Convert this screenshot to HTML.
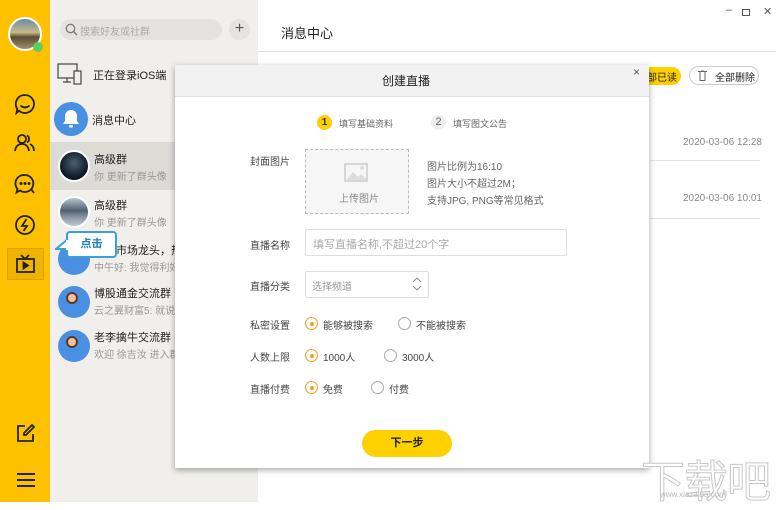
<!DOCTYPE html>
<html><head><meta charset="utf-8"><style>
*{margin:0;padding:0;box-sizing:border-box}
body{width:776px;height:502px;overflow:hidden;position:relative;background:#fff;font-family:"Liberation Sans","Noto Sans CJK SC",sans-serif;font-size:11px;color:#333}
.a{position:absolute}
.side{left:0;top:0;width:50px;height:502px;background:#fdc100}
.list{left:50px;top:0;width:208px;height:502px;background:#f0efeb}
.t{position:absolute;white-space:nowrap}
.av{position:absolute;width:32px;height:32px;border-radius:50%}
.lbl{position:absolute;left:250px;font-size:10px;color:#444}
.radio{position:absolute;width:13px;height:13px;border-radius:50%;border:1px solid #aaa;background:#fff}
.radio.on{border-color:#f0a020}
.radio.on:after{content:"";position:absolute;left:3.5px;top:3.5px;width:4px;height:4px;border-radius:50%;background:#f0a020}
.rt{position:absolute;font-size:10px;color:#444}
</style></head><body>
<div class="a side"></div>
<div class="a list"></div>
<div class="av" style="left:8px;top:17px;width:34px;height:34px;background:linear-gradient(#6a8aa8 0%,#c9b98a 45%,#5a4a30 60%,#a09070 100%);border:2px solid #fff"></div>
<div class="a" style="left:33px;top:42px;width:10px;height:10px;border-radius:50%;background:#5bd060"></div>
<svg class="a" style="left:14px;top:93px" width="22" height="22" viewBox="0 0 22 22" fill="none" stroke="#222" stroke-width="1.8"><path d="M11 2a9 9 0 1 1-6 15.7L2.5 20l.8-4A9 9 0 0 1 11 2z"/><path d="M6.5 12.5q4.5 4 9 0"/></svg>
<svg class="a" style="left:14px;top:133px" width="22" height="20" viewBox="0 0 22 20" fill="none" stroke="#222" stroke-width="1.8"><circle cx="8" cy="6" r="4"/><path d="M1 18q1-7 7-7t7 7"/><path d="M13 2.5a4 4 0 0 1 0 7M16 11q4 2 4 7"/></svg>
<svg class="a" style="left:14px;top:173px" width="22" height="22" viewBox="0 0 22 22" fill="none" stroke="#222" stroke-width="1.8"><path d="M11 2a8.5 8.5 0 1 1-5 15.5L2.5 19.5l1-3.5A8.5 8.5 0 0 1 11 2z"/><circle cx="7" cy="10.5" r=".6" fill="#222"/><circle cx="11" cy="10.5" r=".6" fill="#222"/><circle cx="15" cy="10.5" r=".6" fill="#222"/><path d="M17 16l3 4"/></svg>
<svg class="a" style="left:14px;top:214px" width="22" height="22" viewBox="0 0 22 22" fill="none" stroke="#222" stroke-width="1.8"><circle cx="11" cy="11" r="9"/><path d="M12.5 5L8 12h5l-3.5 5"/></svg>
<div class="a" style="left:7px;top:248px;width:37px;height:32px;background:#f0b400;border:1px solid #d9a200"></div>
<svg class="a" style="left:15px;top:253px" width="21" height="21" viewBox="0 0 21 21" fill="none" stroke="#222" stroke-width="1.8"><path d="M6 2l4 4 4-4"/><rect x="2" y="6" width="17" height="13"/><path d="M8.5 9.5v6l4.5-3z" fill="#222"/></svg>
<svg class="a" style="left:16px;top:423px" width="20" height="20" viewBox="0 0 20 20" fill="none" stroke="#222" stroke-width="1.8"><path d="M9 3H2v15h15v-7"/><path d="M16 2l2 2-8 8H8v-2z"/></svg>
<svg class="a" style="left:16px;top:472px" width="20" height="16" viewBox="0 0 20 16" stroke="#222" stroke-width="2"><path d="M1 2h18M1 8h18M1 14h18"/></svg>
<div class="a" style="left:60px;top:19px;width:162px;height:21px;border-radius:11px;background:#e4e3df"></div>
<svg class="a" style="left:65px;top:23px" width="13" height="13" viewBox="0 0 13 13" fill="none" stroke="#777" stroke-width="1.3"><circle cx="5.5" cy="5.5" r="4.2"/><path d="M8.5 8.5l3.5 3.5"/></svg>
<div class="t" style="left:80px;top:23px;font-size:10px;color:#aaa">搜索好友或社群</div>
<div class="a" style="left:229px;top:19px;width:21px;height:21px;border-radius:50%;background:#e4e3df;text-align:center;line-height:20px;font-size:16px;color:#555">+</div>
<svg class="a" style="left:57px;top:62px" width="26" height="24" viewBox="0 0 26 24" fill="none" stroke="#444" stroke-width="1.2"><rect x="1" y="2" width="19" height="14"/><path d="M6 20h8M10 16v4"/><rect x="17" y="9" width="7" height="13" fill="#f0efeb"/></svg>
<div class="t" style="left:93px;top:67px;font-size:11px;color:#222">正在登录iOS端</div>
<div class="av" style="left:54px;top:102px;width:34px;height:34px;background:#4a90e2"></div>
<svg class="a" style="left:62px;top:109px" width="18" height="20" viewBox="0 0 18 20" fill="#fff"><path d="M9 1a6 6 0 0 1 6 6v5l2 3H1l2-3V7a6 6 0 0 1 6-6z"/><rect x="7" y="16" width="4" height="2.5" rx="1"/></svg>
<div class="t" style="left:92px;top:112px;font-size:11px;color:#222">消息中心</div>
<div class="a" style="left:50px;top:142px;width:208px;height:48px;background:#dcdbd6"></div>
<div class="av" style="left:58px;top:150px;background:radial-gradient(circle at 50% 40%,#4a6070,#0a1520 70%);border:2px solid #fff"></div>
<div class="t" style="left:94px;top:151px;font-size:11px;color:#222">高级群</div>
<div class="t" style="left:94px;top:168px;font-size:10px;color:#999">你 更新了群头像</div>
<div class="av" style="left:58px;top:196px;background:linear-gradient(#b8c4d0 0%,#506070 45%,#8a9aa8 70%,#c0c8d0 100%);border:2px solid #fff"></div>
<div class="t" style="left:94px;top:197px;font-size:11px;color:#222">高级群</div>
<div class="t" style="left:94px;top:214px;font-size:10px;color:#999">你 更新了群头像</div>
<div class="av" style="left:58px;top:243px;background:#4a90e2"></div>
<div class="t" style="left:116px;top:242px;font-size:11px;color:#222">市场龙头，热</div>
<div class="t" style="left:94px;top:259px;font-size:10px;color:#999">中午好: 我觉得利好</div>
<div class="av" style="left:58px;top:286px;background:#4a90e2"></div>
<div class="a" style="left:66px;top:292px;width:12px;height:12px;border-radius:50%;background:#f2c09a;border:2px solid #5a3a2a"></div>
<div class="t" style="left:94px;top:285px;font-size:11px;color:#222">博股通金交流群</div>
<div class="t" style="left:94px;top:302px;font-size:10px;color:#999">云之翼财富5: 就说没</div>
<div class="av" style="left:58px;top:330px;background:#4a90e2"></div>
<div class="a" style="left:66px;top:336px;width:12px;height:12px;border-radius:50%;background:#f2c09a;border:2px solid #5a3a2a"></div>
<div class="t" style="left:94px;top:329px;font-size:11px;color:#222">老李擒牛交流群</div>
<div class="t" style="left:94px;top:346px;font-size:10px;color:#999">欢迎 徐吉汝 进入群</div>
<div class="a" style="left:66px;top:231px;width:51px;height:27px;border:2px solid #3aa0d8;border-radius:4px;background:#fff;text-align:center;line-height:22px;font-size:11px;font-weight:bold;color:#1a7fc0">点击</div>
<svg class="a" style="left:55px;top:238px" width="13" height="14" viewBox="0 0 13 14"><path d="M13 1L1 11h12z" fill="#fff" stroke="#3aa0d8" stroke-width="2"/><rect x="11" y="2" width="3" height="10" fill="#fff"/></svg>
<div class="t" style="left:281px;top:23px;font-size:13px;color:#222">消息中心</div>
<div class="t" style="left:726px;top:4px;font-size:11px;color:#555">–</div>
<div class="a" style="left:742px;top:9px;width:8px;height:7px;border:1px solid #555"></div>
<div class="t" style="left:763px;top:5px;font-size:11px;color:#555">✕</div>
<div class="a" style="left:258px;top:51px;width:518px;height:1px;background:#ddd"></div>
<div class="a" style="left:620px;top:67px;width:61px;height:18px;border-radius:9px;background:#fdd000"></div>
<div class="t" style="left:647px;top:69px;font-size:10px;color:#222">部已读</div>
<div class="a" style="left:689px;top:66px;width:70px;height:19px;border-radius:10px;border:1px solid #ccc"></div>
<svg class="a" style="left:698px;top:70px" width="9" height="11" viewBox="0 0 9 11" fill="none" stroke="#666"><path d="M0 1.5h9M2 1.5v9h5v-9M3 0h3"/></svg>
<div class="t" style="left:715px;top:69px;font-size:10px;color:#222">全部删除</div>
<div class="t" style="left:683px;top:137px;font-size:10px;color:#888">2020-03-06 12:28</div>
<div class="a" style="left:650px;top:160px;width:110px;height:1px;background:#e3e3e3"></div>
<div class="t" style="left:683px;top:193px;font-size:10px;color:#888">2020-03-06 10:01</div>
<div class="a" style="left:650px;top:218px;width:110px;height:1px;background:#e3e3e3"></div>
<div class="a" style="left:175px;top:65px;width:474px;height:403px;background:#fff;box-shadow:0 2px 6px rgba(0,0,0,.35)"></div>
<div class="a" style="left:175px;top:65px;width:474px;height:32px;background:#f2f2f2;border-bottom:1px solid #e2e2e2"></div>
<div class="t" style="left:382px;top:72px;font-size:12px;color:#222">创建直播</div>
<div class="t" style="left:633px;top:65px;font-size:12px;color:#555">×</div>
<div class="a" style="left:317px;top:115px;width:15px;height:15px;border-radius:50%;background:#fdd000;text-align:center;line-height:15px;font-size:10px;font-weight:bold;color:#333">1</div>
<div class="t" style="left:339px;top:117px;font-size:9px;color:#666">填写基础资料</div>
<div class="a" style="left:431px;top:115px;width:15px;height:15px;border-radius:50%;background:#eee;text-align:center;line-height:15px;font-size:11px;color:#666">2</div>
<div class="t" style="left:453px;top:117px;font-size:9px;color:#666">填写图文公告</div>
<div class="lbl" style="top:153px">封面图片</div>
<div class="a" style="left:305px;top:149px;width:104px;height:65px;border:1px dashed #bbb;background:#f6f6f6"></div>
<svg class="a" style="left:344px;top:163px" width="24" height="19" viewBox="0 0 24 19"><rect x="1" y="1" width="22" height="17" fill="none" stroke="#ccc" stroke-width="1.5"/><path d="M2 17l7-8 5 5 3-3 6 6z" fill="#ddd"/><circle cx="18" cy="5" r="2" fill="#ddd"/></svg>
<div class="t" style="left:339px;top:190px;font-size:10px;color:#888">上传图片</div>
<div class="t" style="left:427px;top:158px;font-size:10px;color:#666">图片比例为16:10</div>
<div class="t" style="left:427px;top:175px;font-size:10px;color:#666">图片大小不超过2M；</div>
<div class="t" style="left:427px;top:192px;font-size:10px;color:#666">支持JPG, PNG等常见格式</div>
<div class="lbl" style="top:237px">直播名称</div>
<div class="a" style="left:305px;top:229px;width:262px;height:27px;border:1px solid #ddd;border-radius:2px"></div>
<div class="t" style="left:313px;top:236px;font-size:11px;color:#aaa">填写直播名称,不超过20个字</div>
<div class="lbl" style="top:278px">直播分类</div>
<div class="a" style="left:305px;top:271px;width:124px;height:27px;border:1px solid #ddd;border-radius:2px"></div>
<div class="t" style="left:312px;top:278px;font-size:10px;color:#999">选择频道</div>
<svg class="a" style="left:412px;top:276px" width="10" height="16" viewBox="0 0 10 16" fill="none" stroke="#888"><path d="M1 6l4-4 4 4M1 10l4 4 4-4"/></svg>
<div class="lbl" style="top:317px">私密设置</div>
<div class="radio on" style="left:305px;top:317px"></div><div class="rt" style="left:323px;top:317px">能够被搜索</div>
<div class="radio" style="left:398px;top:317px"></div><div class="rt" style="left:416px;top:317px">不能被搜索</div>
<div class="lbl" style="top:349px">人数上限</div>
<div class="radio on" style="left:305px;top:349px"></div><div class="rt" style="left:323px;top:349px">1000人</div>
<div class="radio" style="left:384px;top:349px"></div><div class="rt" style="left:402px;top:349px">3000人</div>
<div class="lbl" style="top:381px">直播付费</div>
<div class="radio on" style="left:305px;top:381px"></div><div class="rt" style="left:323px;top:381px">免费</div>
<div class="radio" style="left:371px;top:381px"></div><div class="rt" style="left:389px;top:381px">付费</div>
<div class="a" style="left:362px;top:430px;width:90px;height:27px;border-radius:14px;background:#fdd000;text-align:center;line-height:27px;font-size:11px;font-weight:bold;color:#222">下一步</div>
<div class="t" style="left:641px;top:446px;font-size:44px;color:#fff;-webkit-text-stroke:1px #c8c8c8;letter-spacing:-1px">下载吧</div>
<div class="t" style="left:660px;top:490px;font-size:8px;color:#bbb">www.xiazaiba.com</div>
</body></html>
